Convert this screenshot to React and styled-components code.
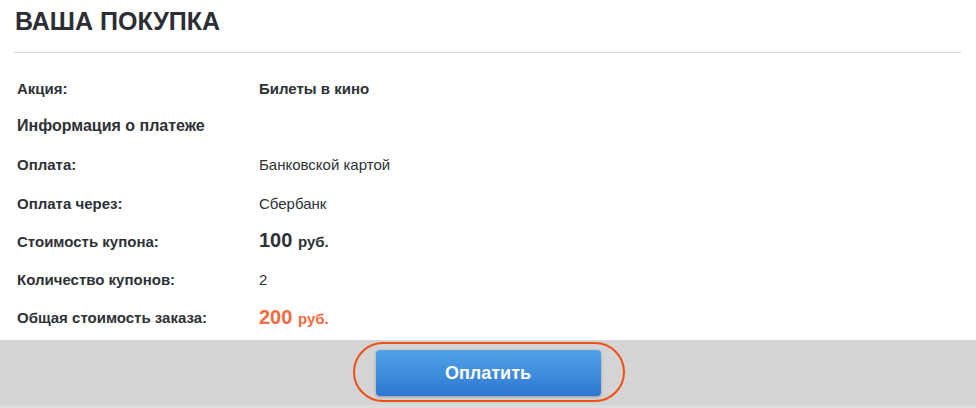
import React from 'react';
import styled, { createGlobalStyle } from 'styled-components';

const GlobalStyle = createGlobalStyle`
  html, body {
    margin: 0;
    padding: 0;
    background: #ffffff;
  }
  body {
    font-family: "Liberation Sans", Arial, sans-serif;
    color: #2e3136;
  }
`;

const rows = [
  { label: 'Акция:', value: 'Билеты в кино', kind: 'strong' },
  { label: 'Информация о платеже', section: true },
  { label: 'Оплата:', value: 'Банковской картой' },
  { label: 'Оплата через:', value: 'Сбербанк' },
  { label: 'Стоимость купона:', price: '100' },
  { label: 'Количество купонов:', value: '2' },
  { label: 'Общая стоимость заказа:', price: '200', accent: true },
];

const App = () => {
  return (
    <>
      <GlobalStyle />
      <StyledPage>
        <StyledContent>
          <StyledTitle>ВАША ПОКУПКА</StyledTitle>
          <StyledList>
            {rows.map((row) => (
              <StyledRow key={row.label}>
                <StyledLabel $section={row.section}>{row.label}</StyledLabel>
                {row.value && (
                  <StyledValue $strong={row.kind === 'strong'}>{row.value}</StyledValue>
                )}
                {row.price && (
                  <StyledPrice $accent={row.accent}>
                    {row.price} <StyledCurrency>руб.</StyledCurrency>
                  </StyledPrice>
                )}
              </StyledRow>
            ))}
          </StyledList>
        </StyledContent>

        <StyledFooter>
          <StyledButtonWrap>
            <StyledPayButton>Оплатить</StyledPayButton>
            <StyledHighlight />
          </StyledButtonWrap>
        </StyledFooter>
      </StyledPage>
    </>
  );
};

export default App;

const StyledPage = styled.div`
  width: 976px;
  height: 408px;
  display: flex;
  flex-direction: column;
  overflow: hidden;
`;

const StyledContent = styled.div`
  padding: 6px 15px 3px 14px;
`;

const StyledTitle = styled.h1`
  margin: 0;
  padding: 0 0 16px 1px;
  font-size: 25px;
  line-height: 30px;
  font-weight: bold;
  color: #2b2e33;
  border-bottom: 1px solid #d6d6d6;
`;

const StyledList = styled.div`
  display: flex;
  flex-direction: column;
  padding: 16px 0 0 3px;
`;

const StyledRow = styled.div`
  display: grid;
  grid-template-columns: 242px 1fr;
  align-items: center;
  height: 38.3px;
`;

const StyledLabel = styled.div`
  font-size: ${({ $section }) => ($section ? '16px' : '15px')};
  font-weight: bold;
  color: #2e3136;
  white-space: nowrap;
`;

const StyledValue = styled.div`
  font-size: 15px;
  font-weight: ${({ $strong }) => ($strong ? 'bold' : 'normal')};
  color: #2e3136;
`;

const StyledPrice = styled.div`
  font-size: 20px;
  font-weight: bold;
  color: ${({ $accent }) => ($accent ? '#f46a3c' : '#2e3136')};
  line-height: 24px;
`;

const StyledCurrency = styled.span`
  font-size: 15px;
`;

const StyledFooter = styled.div`
  flex: 1;
  background: #d4d4d4;
  border-bottom: 3px solid #dcdcdc;
  display: flex;
  justify-content: center;
  align-items: flex-start;
  padding-top: 10px;
`;

const StyledButtonWrap = styled.div`
  position: relative;
`;

const StyledPayButton = styled.button`
  width: 225px;
  height: 46px;
  border: none;
  border-radius: 4px;
  background: linear-gradient(to bottom, #50a4e7, #2f76d1);
  box-shadow: 0 1px 3px rgba(0, 0, 0, 0.3);
  color: #ffffff;
  font-family: "Liberation Sans", Arial, sans-serif;
  font-size: 18px;
  font-weight: bold;
  cursor: pointer;
`;

const StyledHighlight = styled.div`
  position: absolute;
  left: -23px;
  right: -24px;
  top: -8px;
  bottom: -6px;
  border: 2.5px solid #f04f14;
  border-radius: 32px;
  pointer-events: none;
`;
